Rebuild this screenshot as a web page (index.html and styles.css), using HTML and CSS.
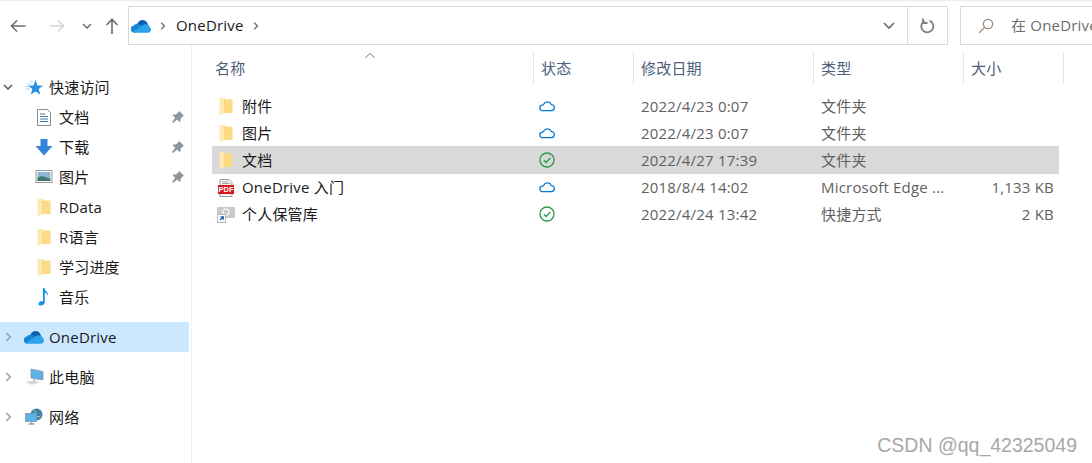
FILE: index.html
```html
<!DOCTYPE html>
<html>
<head>
  <title>OneDrive</title>
  <meta charset="UTF-8">
  <link rel="stylesheet" href="styles.css">
</head>
<body>
  <svg class="defs" width="0" height="0">
    <symbol id="folder" viewBox="0 0 13 17">
      <path d="M4 1.500h9V15H4z" fill="#fbdc84"/>
      <path d="M0 0h5v15l-4.200 2H0z" fill="#fdeab0"/>
      <path d="M5 0v15" stroke="#f4cf6e" stroke-width=".6"/>
    </symbol>
    <symbol id="cloud" viewBox="0 0 20 14">
      <path d="M5.500 4.200a5 5 0 0 1 9 .5 3.400 3.400 0 0 1 3.600 3.600 3.600 3.600 0 0 1-3.600 3.600H4.400a3.200 3.200 0 0 1-.4-6.400c.5-.1 1-.6 1.500-1.300z" fill="none" stroke="#0078d7" stroke-width="1.500"/>
    </symbol>
    <symbol id="synced" viewBox="0 0 16 16">
      <circle cx="8" cy="8" r="7" fill="none" stroke="#2a9a4a" stroke-width="1.300"/>
      <path d="M4.800 8.200l2.300 2.300 4.200-4.500" fill="none" stroke="#2a9a4a" stroke-width="1.300"/>
    </symbol>
    <symbol id="od" viewBox="0 0 20 14">
      <path d="M6.500 4.500C8 1 13-.5 16 3.500c.6.8 1 1.500 1 2.500L8 10z" fill="#0d5fb3"/>
      <path d="M5 5a4 4 0 0 1 3-.5L12 8 5 13.500H3a3 3 0 0 1-3-3A3.500 3.500 0 0 1 3 6.500 3 3 0 0 1 5 5z" fill="#1684d8"/>
      <path d="M3 13.800a3 3 0 0 1-1.500-.5L11 6.500c1.500-1 3-1.500 4.500-1.300 2 .2 3 1.500 3.200 3 1 .3 1.300 1.500 1.300 2.300 0 1.700-1.200 3.300-3 3.300z" fill="#2ea3ea"/>
    </symbol>
    <symbol id="pin" viewBox="0 0 14 14">
      <path d="M8.200 1l4.800 4.800-1.400.6-2 2.400-.2 2.400-1 .8-2.200-2.600L2 13l-1-1 3.200-4.200-2.600-2.200.8-1 2.400-.2 2.400-2z" fill="#8b959e"/>
    </symbol>
    <symbol id="chev" viewBox="0 0 8 12">
      <path d="M1.500 1.500L6 6l-4.500 4.500" fill="none" stroke="#a6a6a6" stroke-width="2"/>
    </symbol>
  </svg>

  <div class="toolbar">
    <svg class="nav-icon back" width="16" height="14" viewBox="0 0 16 14"><path d="M15.500 7H1.500M7 1.500L1.500 7 7 12.500" fill="none" stroke="#6d6d6d" stroke-width="1.600"/></svg>
    <svg class="nav-icon forward" width="16" height="14" viewBox="0 0 16 14"><path d="M.5 7h14M9 1.500L14.500 7 9 12.500" fill="none" stroke="#d6d6d6" stroke-width="1.600"/></svg>
    <svg class="nav-icon recent" width="10" height="6" viewBox="0 0 10 6"><path d="M1 1l4 4 4-4" fill="none" stroke="#6d6d6d" stroke-width="1.500"/></svg>
    <svg class="nav-icon up" width="14" height="16" viewBox="0 0 14 16"><path d="M7 16V1.500M1.500 7L7 1.500 12.500 7" fill="none" stroke="#6d6d6d" stroke-width="1.600"/></svg>
    <div class="address">
      <svg class="addr-cloud" width="20" height="14"><use href="#od"/></svg>
      <svg class="addr-chev" width="6" height="10" viewBox="0 0 8 12"><path d="M1.500 1.500L6 6l-4.500 4.500" fill="none" stroke="#6d6d6d" stroke-width="1.800"/></svg>
      <span class="addr-text">OneDrive</span>
      <svg class="addr-chev" width="6" height="10" viewBox="0 0 8 12"><path d="M1.500 1.500L6 6l-4.500 4.500" fill="none" stroke="#6d6d6d" stroke-width="1.800"/></svg>
      <svg class="addr-drop" width="12" height="7" viewBox="0 0 12 7"><path d="M1 1l5 5 5-5" fill="none" stroke="#6d6d6d" stroke-width="1.700"/></svg>
      <div class="refresh">
        <svg width="15" height="16" viewBox="0 0 15 16"><path d="M9.500 2.700a6 6 0 1 1-5 .3" fill="none" stroke="#808080" stroke-width="1.800"/><path d="M3 .5v4.500h4.500" fill="none" stroke="#808080" stroke-width="1.800"/></svg>
      </div>
    </div>
    <div class="search">
      <svg width="16" height="16" viewBox="0 0 16 16"><circle cx="10" cy="6" r="4.700" fill="none" stroke="#8a8a8a" stroke-width="1.200"/><path d="M6.500 9.500L1 15" stroke="#b08968" stroke-width="1.300"/></svg>
      <span>在 OneDrive</span>
    </div>
  </div>

  <div class="main">
    <div class="sidebar">
      <div class="tree-row top">
        <svg class="twist open" width="10" height="6" viewBox="0 0 10 6"><path d="M1 1l4 4 4-4" fill="none" stroke="#5c5c5c" stroke-width="1.600"/></svg>
        <svg class="tree-icon" width="18" height="15" viewBox="0 0 18 15"><path d="M10.500 0l2 5.500 5.500.2-4.300 3.400 1.500 5.500-4.700-3.200-4.700 3.200 1.500-5.500L3 5.700l5.500-.2z" fill="#2a8fe0"/><path d="M5 1.500h3M2 4h4M0 6.500h3.500M1 9h4" stroke="#a9d2f2"/></svg>
        <span>快速访问</span>
      </div>
      <div class="tree-row sub">
        <svg class="tree-icon" width="16" height="17" viewBox="0 0 16 17"><path d="M1.500 .5h10l3 3v13h-13z" fill="#fff" stroke="#8d8d8d"/><path d="M4 5h5M4 7.500h8M4 10h8M4 12.500h8" stroke="#4d7ca8"/></svg>
        <span>文档</span>
        <svg class="pin" width="14" height="14"><use href="#pin"/></svg>
      </div>
      <div class="tree-row sub">
        <svg class="tree-icon" width="17" height="17" viewBox="0 0 17 17"><path d="M5 0h7v7h5l-8.500 9.500L0 7h5z" fill="#3285d8"/></svg>
        <span>下载</span>
        <svg class="pin" width="14" height="14"><use href="#pin"/></svg>
      </div>
      <div class="tree-row sub">
        <svg class="tree-icon" width="17" height="14" viewBox="0 0 17 14"><rect x=".5" y=".5" width="16" height="12" fill="#fff" stroke="#9a9a9a"/><rect x="2" y="2" width="13" height="9" fill="#8fb8d8"/><path d="M2 8c3-3 6-2 13 1v2H2z" fill="#3f7a6a"/></svg>
        <span>图片</span>
        <svg class="pin" width="14" height="14"><use href="#pin"/></svg>
      </div>
      <div class="tree-row sub">
        <svg class="tree-icon" width="13" height="17"><use href="#folder"/></svg>
        <span>RData</span>
      </div>
      <div class="tree-row sub">
        <svg class="tree-icon" width="13" height="17"><use href="#folder"/></svg>
        <span>R语言</span>
      </div>
      <div class="tree-row sub">
        <svg class="tree-icon" width="13" height="17"><use href="#folder"/></svg>
        <span>学习进度</span>
      </div>
      <div class="tree-row sub">
        <svg class="tree-icon" width="16" height="18" viewBox="0 0 16 18"><path d="M7 0h1.500c.3 3 4 4 3.500 8-.5-2-2-3-3.200-3.200V14c0 2.500-2.500 3.500-4.500 3.500S2 16 3 14.500s3-1.500 4-1z" fill="#1296e8"/></svg>
        <span>音乐</span>
      </div>

      <div class="tree-row top active group-gap">
        <svg class="twist" width="7" height="11"><use href="#chev"/></svg>
        <svg class="tree-icon" width="20" height="14"><use href="#od"/></svg>
        <span>OneDrive</span>
      </div>
      <div class="tree-row top group-gap">
        <svg class="twist" width="7" height="11"><use href="#chev"/></svg>
        <svg class="tree-icon" width="20" height="18" viewBox="0 0 20 18"><path d="M7 1l12 2.500v8.500L7 10z" fill="#5ab2e6" stroke="#8a9aa6" stroke-width=".8"/><path d="M1 14l9-1.500 6 1.500-8 3z" fill="#d5d9dc"/><path d="M10 11v2" stroke="#9aa4ab"/></svg>
        <span>此电脑</span>
      </div>
      <div class="tree-row top group-gap">
        <svg class="twist" width="7" height="11"><use href="#chev"/></svg>
        <svg class="tree-icon" width="19" height="18" viewBox="0 0 19 18"><circle cx="12" cy="6.500" r="6" fill="#3d85a8"/><path d="M9 2c2 1 3 3 1 5s3 3 6 1" fill="none" stroke="#a8d8a8"/><rect x="1" y="5.500" width="11" height="8" fill="#59b4ea" stroke="#7f98a8" stroke-width=".8"/><path d="M4 16h6M7 13.500V16" stroke="#9aa4ab" stroke-width="1.500"/></svg>
        <span>网络</span>
      </div>
    </div>

    <div class="content">
      <div class="file-header">
        <div class="col name">名称</div>
        <div class="col">状态</div>
        <div class="col">修改日期</div>
        <div class="col">类型</div>
        <div class="col">大小</div>
        <div class="col-end"></div>
        <svg class="sort" width="10" height="5" viewBox="0 0 10 5"><path d="M.5 4.500L5 .5l4.500 4" fill="none" stroke="#7a7a7a"/></svg>
      </div>
      <div class="file-list">
        <div class="file-row">
          <div class="cell name"><svg width="13" height="17"><use href="#folder"/></svg><span>附件</span></div>
          <div class="cell status"><svg width="17" height="13"><use href="#cloud"/></svg></div>
          <div class="cell">2022/4/23 0:07</div>
          <div class="cell">文件夹</div>
          <div class="cell size"></div>
        </div>
        <div class="file-row">
          <div class="cell name"><svg width="13" height="17"><use href="#folder"/></svg><span>图片</span></div>
          <div class="cell status"><svg width="17" height="13"><use href="#cloud"/></svg></div>
          <div class="cell">2022/4/23 0:07</div>
          <div class="cell">文件夹</div>
          <div class="cell size"></div>
        </div>
        <div class="file-row selected">
          <div class="cell name"><svg width="13" height="17"><use href="#folder"/></svg><span>文档</span></div>
          <div class="cell status"><svg width="16" height="16"><use href="#synced"/></svg></div>
          <div class="cell">2022/4/27 17:39</div>
          <div class="cell">文件夹</div>
          <div class="cell size"></div>
        </div>
        <div class="file-row">
          <div class="cell name">
            <svg width="16" height="18" viewBox="0 0 16 18"><path d="M2 .5h9l3 3v14H2z" fill="#f4f4f4" stroke="#9a9a9a"/><path d="M4 3h6M4 4.500h8" stroke="#a8a8a8"/><rect y="6" width="16" height="9" fill="#d6191b"/><text class="pdf" x="8" y="13" text-anchor="middle">PDF</text></svg>
            <span>OneDrive 入门</span>
          </div>
          <div class="cell status"><svg width="17" height="13"><use href="#cloud"/></svg></div>
          <div class="cell">2018/8/4 14:02</div>
          <div class="cell">Microsoft Edge ...</div>
          <div class="cell size">1,133 KB</div>
        </div>
        <div class="file-row">
          <div class="cell name">
            <svg width="18" height="17" viewBox="0 0 18 17"><rect y="1" width="18" height="11" fill="#c9c9c9"/><circle cx="9" cy="6" r="3" fill="none" stroke="#f0f0f0" stroke-width="1.500"/><rect x=".5" y="8.500" width="8" height="8" fill="#fff" stroke="#b5b5b5"/><path d="M3 14l3-3M3.500 10.800H6.300V13.500" fill="none" stroke="#1d5fa8" stroke-width="1.300"/></svg>
            <span>个人保管库</span>
          </div>
          <div class="cell status"><svg width="16" height="16"><use href="#synced"/></svg></div>
          <div class="cell">2022/4/24 13:42</div>
          <div class="cell">快捷方式</div>
          <div class="cell size">2 KB</div>
        </div>
      </div>
    </div>
  </div>

  <div class="watermark">CSDN @qq_42325049</div>
</body>
</html>
```

FILE: styles.css
```css
body {
  margin: 0;
  width: 1092px;
  height: 463px;
  overflow: hidden;
  position: relative;
  background-color: #ffffff;
  color: #1a1a1a;
  font-family: "Open Sans", "Noto Sans CJK SC", sans-serif;
  font-size: 15px;
  line-height: 20px;
  letter-spacing: .2px;
}

.defs {
  position: absolute;
}

.toolbar {
  display: flex;
  align-items: center;
  height: 44px;
  border-top: 1px solid #ececec;
}

.nav-icon {
  flex-shrink: 0;
  margin-top: 6px;
}

.back {
  margin-left: 10px;
}

.forward {
  margin-left: 23px;
}

.recent {
  margin-left: 17px;
}

.up {
  margin-left: 13px;
}

.address {
  display: flex;
  align-items: center;
  flex-shrink: 0;
  box-sizing: border-box;
  width: 820px;
  height: 39px;
  margin: 5px 0 0 9px;
  border: 1px solid #d9d9d9;
}

.addr-cloud {
  margin-left: 2px;
}

.addr-chev {
  margin-left: 9px;
}

.addr-text {
  margin-left: 10px;
  padding-bottom: 2px;
}

.addr-drop {
  margin-left: auto;
  margin-right: 12px;
}

.refresh {
  display: flex;
  align-items: center;
  justify-content: center;
  width: 39px;
  height: 100%;
  border-left: 1px solid #d9d9d9;
}

.search {
  display: flex;
  align-items: center;
  flex-grow: 1;
  min-width: 0;
  overflow: hidden;
  box-sizing: border-box;
  height: 39px;
  margin: 5px 0 0 12px;
  padding-left: 17px;
  border: 1px solid #d9d9d9;
  border-right: none;
  white-space: nowrap;
  color: #6d6d6d;
}

.search svg {
  flex-shrink: 0;
}

.search span {
  margin-left: 17px;
  padding-bottom: 2px;
}

.main {
  display: flex;
  height: 418px;
}

.sidebar {
  box-sizing: border-box;
  width: 192px;
  padding-top: 27px;
  padding-right: 2px;
  border-right: 1px solid #f0f0f0;
}

.tree-row {
  display: flex;
  align-items: center;
  position: relative;
  height: 30px;
  white-space: nowrap;
}

.tree-row.top {
  padding-left: 24px;
}

.tree-row.sub {
  padding-left: 35px;
}

.tree-row.group-gap {
  margin-top: 10px;
}

.tree-row.active {
  background-color: #cce8ff;
}

.twist {
  position: absolute;
  left: 5px;
  top: 50%;
  transform: translateY(-50%);
}

.twist.open {
  left: 3px;
}

.tree-icon {
  flex-shrink: 0;
  width: 18px;
}

.tree-row.top .tree-icon {
  width: 20px;
}

.tree-row span {
  padding-bottom: 1px;
}

.tree-row.top span {
  margin-left: 5px;
}

.tree-row.sub span {
  margin-left: 6px;
}

.pin {
  position: absolute;
  right: 4px;
  top: 8px;
}

.content {
  flex-grow: 1;
  padding-left: 20px;
}

.file-header {
  display: grid;
  grid-template-columns: 321px 100px 180px 150px 100px 1px;
  position: relative;
  height: 47px;
  padding-top: 7px;
  box-sizing: border-box;
}

.col {
  display: flex;
  align-items: center;
  box-sizing: border-box;
  height: 32px;
  padding-left: 7px;
  padding-bottom: 1px;
  border-left: 1px solid #e5e5e5;
  color: #4c607a;
}

.col.name {
  padding-left: 3px;
  border-left: none;
}

.col-end {
  height: 32px;
  background-color: #e5e5e5;
}

.sort {
  position: absolute;
  left: 153px;
  top: 8px;
}

.file-list {
  padding-top: 1px;
}

.file-row {
  display: grid;
  grid-template-columns: 321px 100px 180px 150px 96px;
  align-items: center;
  height: 27px;
  width: 847px;
}

.file-row.selected {
  height: 28px;
  margin-top: -1px;
  background-color: #d9d9d9;
}

.cell {
  padding-left: 8px;
  padding-bottom: 1px;
  white-space: nowrap;
  color: #5f5f5f;
}

.cell.name {
  display: flex;
  align-items: center;
  padding-left: 5px;
  padding-bottom: 0;
  color: #1a1a1a;
}

.cell.name svg {
  flex-shrink: 0;
  width: 18px;
}

.cell.name span {
  margin-left: 7px;
  padding-bottom: 1px;
}

.cell.status {
  display: flex;
  align-items: center;
  padding-left: 6px;
}

.cell.size {
  padding-left: 0;
  padding-right: 5px;
  text-align: right;
}

.pdf {
  fill: #ffffff;
  font-family: "Liberation Sans", sans-serif;
  font-size: 7.500px;
  font-weight: 700;
  letter-spacing: 0;
}

.watermark {
  position: absolute;
  right: 15px;
  bottom: 8px;
  color: #a8a8a8;
  font-family: "Liberation Sans", sans-serif;
  font-size: 19.500px;
  letter-spacing: 0;
}
```
